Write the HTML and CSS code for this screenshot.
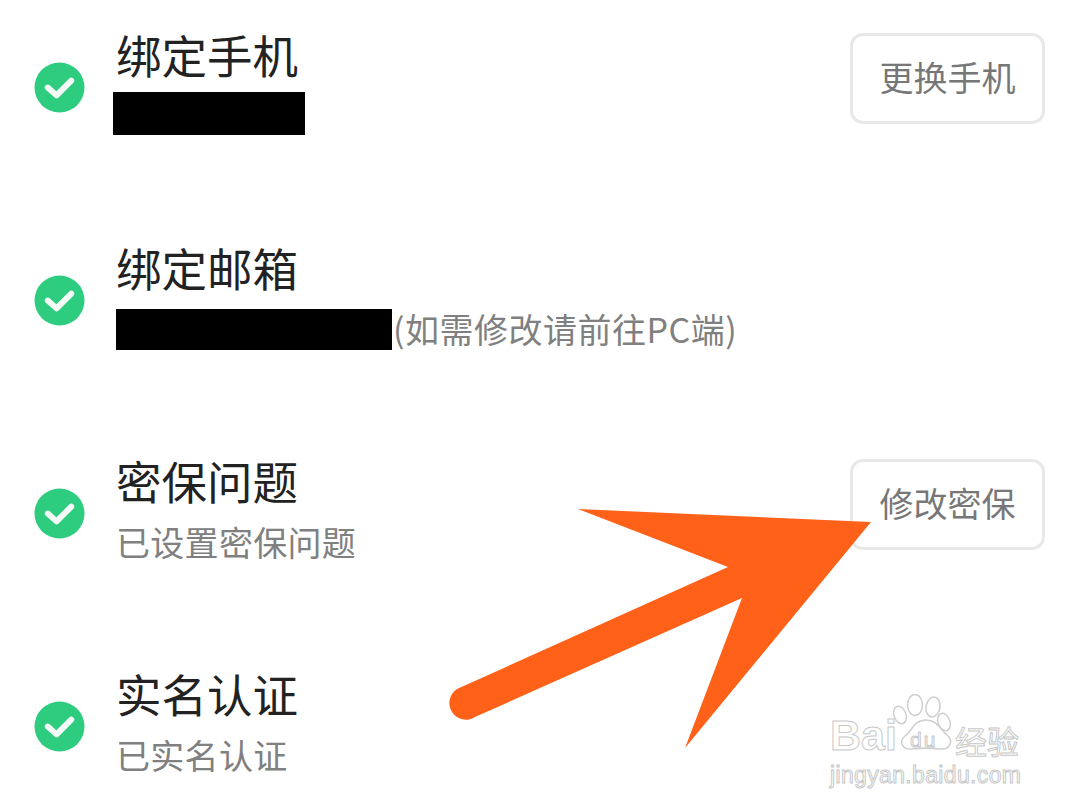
FILE: index.html
```html
<!DOCTYPE html>
<html lang="zh-CN">
<head>
  <meta charset="UTF-8">
  <title>账号安全</title>
  <link rel="stylesheet" href="styles.css">
</head>
<body>
  <div class="list">
    <div class="row">
      <svg class="ok" viewBox="0 0 52 52"><circle cx="26" cy="26" r="25.5" fill="#2dcc7f"/><path d="M14 26l9 8 15-15" fill="none" stroke="#f4fbf7" stroke-width="6" stroke-linecap="round" stroke-linejoin="round"/></svg>
      <div class="info">
        <div class="title">绑定手机</div>
        <div class="sub"><span class="mask mask-phone"></span></div>
      </div>
      <button class="btn">更换手机</button>
    </div>
    <div class="row">
      <svg class="ok" viewBox="0 0 52 52"><circle cx="26" cy="26" r="25.5" fill="#2dcc7f"/><path d="M14 26l9 8 15-15" fill="none" stroke="#f4fbf7" stroke-width="6" stroke-linecap="round" stroke-linejoin="round"/></svg>
      <div class="info">
        <div class="title">绑定邮箱</div>
        <div class="sub"><span class="mask mask-mail"></span><span class="hint">(如需修改请前往PC端)</span></div>
      </div>
    </div>
    <div class="row">
      <svg class="ok" viewBox="0 0 52 52"><circle cx="26" cy="26" r="25.5" fill="#2dcc7f"/><path d="M14 26l9 8 15-15" fill="none" stroke="#f4fbf7" stroke-width="6" stroke-linecap="round" stroke-linejoin="round"/></svg>
      <div class="info">
        <div class="title">密保问题</div>
        <div class="sub">已设置密保问题</div>
      </div>
      <button class="btn">修改密保</button>
    </div>
    <div class="row">
      <svg class="ok" viewBox="0 0 52 52"><circle cx="26" cy="26" r="25.5" fill="#2dcc7f"/><path d="M14 26l9 8 15-15" fill="none" stroke="#f4fbf7" stroke-width="6" stroke-linecap="round" stroke-linejoin="round"/></svg>
      <div class="info">
        <div class="title">实名认证</div>
        <div class="sub">已实名认证</div>
      </div>
    </div>
  </div>

  <!-- 标注箭头 -->
  <svg class="arrow" viewBox="0 0 1080 810">
    <path d="M871 522L578 509L728 567L457 689A15.5 15.5 0 0 0 475 717L742 598L685 748Z" fill="#ff6119"/>
  </svg>

  <!-- 水印 -->
  <div class="mark">
    <svg class="paw" viewBox="890 694 70 60">
      <g fill="#fff" stroke="#cfcfcf" stroke-width="1.5">
        <ellipse cx="900" cy="715" rx="6" ry="9" transform="rotate(-20 900 715)"/>
        <ellipse cx="915" cy="705" rx="7.5" ry="10.5"/>
        <ellipse cx="933" cy="707" rx="7" ry="10" transform="rotate(10 933 707)"/>
        <ellipse cx="944" cy="722" rx="6" ry="9" transform="rotate(-20 944 722)"/>
        <path d="M926 720C914 720 912 731 905 736C898 742 903 750 912 749C920 748 932 748 940 749C950 750 954 741 947 735C940 730 938 720 926 720Z"/>
      </g>
    </svg>
    <div class="mark-top">
      <span class="mark-bai">Bai</span>
      <span class="mark-du">du</span>
      <span class="mark-cn">经验</span>
    </div>
    <div class="mark-url">jingyan.baidu.com</div>
  </div>
</body>
</html>
```

FILE: styles.css
```css
html {
  height: 810px;
  overflow: hidden;
}
body {
  margin: 0;
  height: 810px;
  overflow: hidden;
  background: #fff;
  font-family: "Noto Sans CJK SC", "Noto Sans", sans-serif;
  position: relative;
}
.row {
  display: flex;
  align-items: flex-start;
  height: 213px;
  box-sizing: border-box;
  padding: 33px 35px 0 35px;
}
.row:last-child {
  height: 171px;
}
.ok {
  width: 51px;
  height: 51px;
  margin-top: 29px;
  margin-left: -1px;
  flex-shrink: 0;
}
.info {
  flex: 1;
  margin-left: 31px;
  margin-top: -8px;
}
.title {
  font-size: 45.5px;
  line-height: 58px;
  color: #222;
}
.sub {
  display: flex;
  align-items: center;
  height: 43px;
  font-size: 34px;
  letter-spacing: 0.3px;
  color: #808080;
  margin-top: 11px;
}
.hint {
  letter-spacing: 0.5px;
}
.mask {
  display: block;
  background: #000;
}
.mask-phone {
  width: 192px;
  height: 43px;
  margin-left: -3px;
  margin-top: -5px;
}
.mask-mail {
  width: 276px;
  height: 41px;
  margin-top: 1px;
  margin-right: 1px;
}
.btn {
  width: 195px;
  height: 91px;
  box-sizing: border-box;
  background: #fff;
  border: 3px solid #e8e8e8;
  border-radius: 13px;
  font-family: inherit;
  font-size: 34px;
  color: #777;
  padding: 0 0 5px;
}
.arrow {
  position: absolute;
  left: 0;
  top: 0;
  width: 1080px;
  height: 810px;
}
.mark {
  position: absolute;
  left: 830px;
  top: 694px;
  width: 195px;
  height: 95px;
}
.paw {
  position: absolute;
  left: 60px;
  top: 0;
  width: 70px;
  height: 60px;
}
.mark-top span,
.mark-url {
  position: absolute;
  color: #fff;
  -webkit-text-stroke: 1px #c8c8c8;
  white-space: nowrap;
}
.mark-bai {
  left: 0;
  top: 16px;
  font-family: "Liberation Sans", sans-serif;
  font-size: 43px;
  font-weight: bold;
  line-height: 50px;
}
.mark-du {
  left: 80px;
  top: 36px;
  font-family: "Liberation Sans", sans-serif;
  font-size: 21px;
  letter-spacing: 2px;
  line-height: 20px;
}
.mark-cn {
  left: 125px;
  top: 24px;
  font-size: 32px;
  line-height: 44px;
}
.mark-url {
  left: 0;
  top: 66px;
  font-family: "Liberation Sans", sans-serif;
  font-size: 23px;
  line-height: 30px;
  letter-spacing: 0.35px;
}
```
